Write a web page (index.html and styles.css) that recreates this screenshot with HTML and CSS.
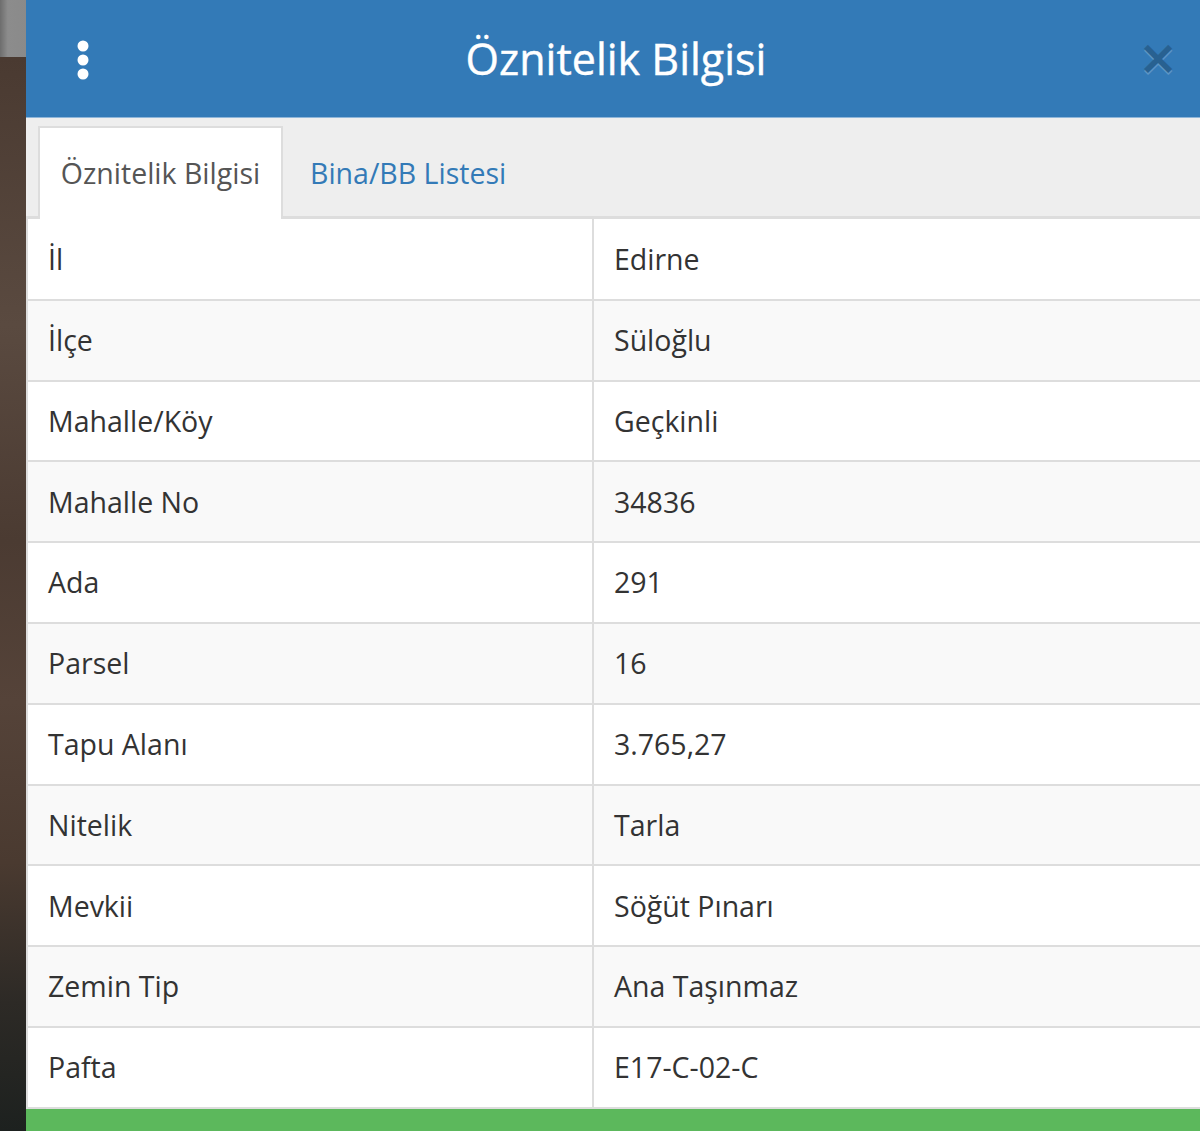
FILE: index.html
```html
<!DOCTYPE html>
<html lang="tr">
<head>
<meta charset="utf-8">
<title>Öznitelik Bilgisi</title>
<link rel="stylesheet" href="styles.css">
</head>
<body>
<div class="page">
  <div class="map-strip">
    <div class="map-top"></div>
    <div class="map-rest"></div>
  </div>
  <div class="panel">
    <div class="panel-header">
      <button class="menu-btn" aria-label="Menü">
        <svg width="14" height="40" viewBox="0 0 14 40"><circle cx="7" cy="6" r="5.5" fill="#fff"/><circle cx="7" cy="20" r="5.5" fill="#fff"/><circle cx="7" cy="34" r="5.5" fill="#fff"/></svg>
      </button>
      <h1 class="panel-title">Öznitelik Bilgisi</h1>
      <button class="close-btn" aria-label="Kapat">×</button>
    </div>
    <div class="tabs">
      <div class="tab active">Öznitelik Bilgisi</div>
      <div class="tab">Bina/BB Listesi</div>
    </div>
    <table class="attr-table">
      <tbody>
        <tr><td>İl</td><td>Edirne</td></tr>
        <tr><td>İlçe</td><td>Süloğlu</td></tr>
        <tr><td>Mahalle/Köy</td><td>Geçkinli</td></tr>
        <tr><td>Mahalle No</td><td>34836</td></tr>
        <tr><td>Ada</td><td>291</td></tr>
        <tr><td>Parsel</td><td>16</td></tr>
        <tr><td>Tapu Alanı</td><td>3.765,27</td></tr>
        <tr><td>Nitelik</td><td>Tarla</td></tr>
        <tr><td>Mevkii</td><td>Söğüt Pınarı</td></tr>
        <tr><td>Zemin Tip</td><td>Ana Taşınmaz</td></tr>
        <tr><td>Pafta</td><td>E17-C-02-C</td></tr>
      </tbody>
    </table>
    <div class="footer-bar"></div>
  </div>
</div>
</body>
</html>
```

FILE: styles.css
```css
html, body {
  margin: 0;
  padding: 0;
  height: 100%;
  overflow: hidden;
}
body {
  font-family: "Open Sans", "Noto Sans", sans-serif;
  color: #333;
}
.page {
  display: flex;
  height: 1131px;
}
.map-strip {
  width: 26px;
  flex: none;
  display: flex;
  flex-direction: column;
}
.map-top {
  height: 57px;
  background: linear-gradient(90deg, #6d6d6d 0, #8c8c8c 30%, #8a8a8a 100%);
}
.map-rest {
  flex: 1;
  background: linear-gradient(180deg, #4a3a31 0%, #5a4a40 25%, #4b3b32 45%, #554339 60%, #4a3a30 75%, #2d2a26 88%, #1d211f 100%);
}
.panel {
  flex: 1;
  display: flex;
  flex-direction: column;
  background: #fff;
  min-width: 0;
}
.panel-header {
  height: 117px;
  flex: none;
  background: #337ab7;
  border-bottom: 1px solid #8fb6d9;
  display: flex;
  align-items: center;
  position: relative;
}
.menu-btn {
  background: none;
  border: 0;
  padding: 0;
  margin-left: 50px;
  width: 14px;
  height: 40px;
  display: flex;
  margin-top: 3px;
}
.panel-title {
  flex: 1;
  margin: 0;
  text-align: center;
  color: #fff;
  font-weight: 400;
  font-size: 43px;
  letter-spacing: 0;
  padding-left: 4px;
  margin-top: 0;
  -webkit-text-stroke: 0.4px #fff;
}
.close-btn {
  background: none;
  border: 0;
  padding: 0;
  width: 30px;
  margin-right: 32px;
  font-family: "DejaVu Sans", sans-serif;
  font-weight: 700;
  font-size: 48px;
  line-height: 1;
  color: #000;
  opacity: 0.2;
  text-shadow: 0 2px 0 #fff;
  margin-top: -3px;
}
.tabs {
  flex: none;
  height: 101px;
  box-sizing: border-box;
  background: #eee;
  border-bottom: 3px solid #ddd;
  padding: 8px 0 0 12px;
  display: flex;
  align-items: stretch;
}
.tab {
  padding: 0 22px 0 25px;
  display: flex;
  align-items: center;
  font-size: 28.5px;
  color: #337ab7;
  margin-bottom: -3px;
  border: 2px solid transparent;
  border-bottom: 0;
  padding-bottom: 2px;
}
.tab.active {
  background: #fff;
  color: #555;
  border-color: #ddd;
  width: 245px;
  box-sizing: border-box;
  justify-content: center;
  padding: 0 0 2px;
}
.attr-table {
  width: 100%;
  border-collapse: collapse;
  font-size: 28.5px;
  border-left: 2px solid #ddd;
}
.attr-table tr {
  height: 80.8px;
}
.attr-table tr:nth-child(even) {
  background: #f9f9f9;
}
.attr-table td {
  border-bottom: 2px solid #ddd;
  padding: 0 0 0 20px;
  color: #333;
  vertical-align: middle;
  line-height: 1.2;
}
.attr-table td:first-child {
  width: 544px;
  border-right: 2px solid #ddd;
}
.footer-bar {
  flex: 1;
  background: #5cb85c;
}
```
